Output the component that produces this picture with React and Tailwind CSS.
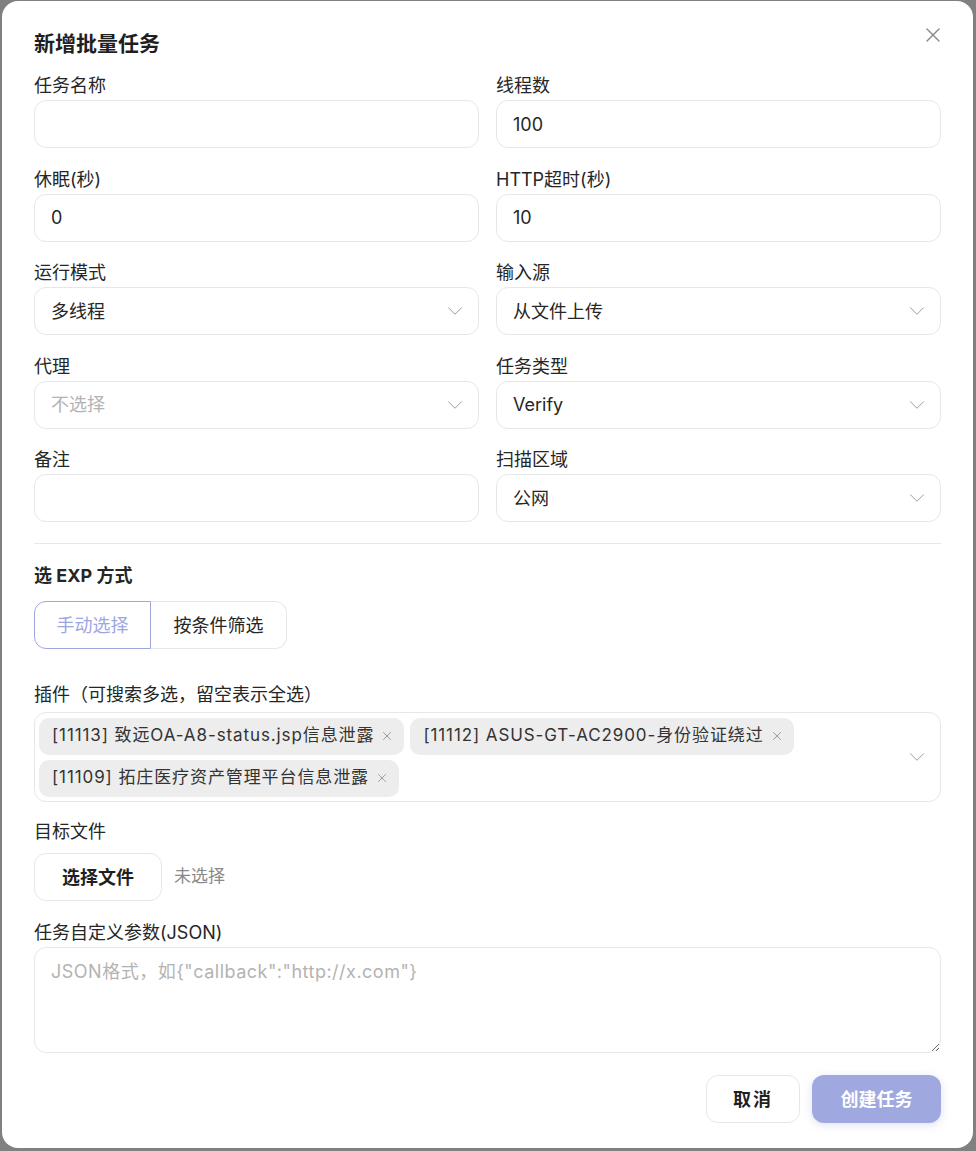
import React, { useState } from 'react';
import { X, ChevronDown } from 'lucide-react';

const FONT = { fontFamily: 'Inter, "Noto Sans CJK SC", sans-serif' };

// Text input styled like the reference
const Field = ({ label, value, placeholder }) => (
  <div className="flex flex-col">
    <label className="h-[26px] text-[18px] leading-[24px] text-[#262626]">{label}</label>
    <input
      defaultValue={value}
      placeholder={placeholder}
      className="h-[48px] w-full rounded-[12px] border border-[#e5e7eb] bg-white px-4 text-[18px] text-[#262626] outline-none placeholder:text-[#b3b3b3]"
    />
  </div>
);

// Fake select box with a thin chevron
const SelectField = ({ label, value, muted }) => (
  <div className="flex flex-col">
    <label className="h-[26px] text-[18px] leading-[24px] text-[#262626]">{label}</label>
    <div className="flex h-[48px] items-center justify-between rounded-[12px] border border-[#e5e7eb] bg-white pl-4 pr-[10px]">
      <span className={`text-[18px] ${muted ? 'text-[#b3b3b3]' : 'text-[#262626]'}`}>{value}</span>
      <ChevronDown size={26} strokeWidth={0.9} className="text-[#9a9a9a]" />
    </div>
  </div>
);

const Tag = ({ children }) => (
  <span className="flex h-[37px] items-center gap-[6px] rounded-[10px] bg-[#ededed] pl-[13px] pr-[10px] text-[17px] tracking-[0.9px] text-[#333]">
    {children}
    <X size={14} strokeWidth={1.4} className="text-[#8a8a8a]" />
  </span>
);

export default function App() {
  const [mode, setMode] = useState('manual');

  return (
    <div className="min-h-[1151px] w-[976px] bg-[#808080] pl-[2px] pt-[1px]" style={FONT}>
      <div className="relative flex h-[1147px] w-[971px] flex-col rounded-[16px] bg-white px-[32px] pt-[28px] text-[#262626]">
        <button className="absolute right-[24px] top-[18px] p-1 text-[#8a8a8a]">
          <X size={24} strokeWidth={1.4} />
        </button>

        <h2 className="h-[30px] text-[21px] font-bold leading-[30px] text-[#1f1f1f]">新增批量任务</h2>

        <div className="mt-[15px] grid grid-cols-2 gap-x-[17px] gap-y-[19.5px]">
          <Field label="任务名称" />
          <Field label="线程数" value="100" />
          <Field label="休眠(秒)" value="0" />
          <Field label="HTTP超时(秒)" value="10" />
          <SelectField label="运行模式" value="多线程" />
          <SelectField label="输入源" value="从文件上传" />
          <SelectField label="代理" value="不选择" muted />
          <SelectField label="任务类型" value="Verify" />
          <Field label="备注" />
          <SelectField label="扫描区域" value="公网" />
        </div>

        <div className="mt-[21px] h-px bg-[#e5e7eb]" />

        <h3 className="mt-[20px] h-[24px] text-[18px] font-bold leading-[24px] text-[#262626]">选 EXP 方式</h3>

        <div className="mt-[13px] flex">
          <button
            onClick={() => setMode('manual')}
            className={`h-[48px] w-[117px] rounded-l-[12px] border text-[18px] ${
              mode === 'manual' ? 'border-[#9ea6e2] text-[#9ea6e2]' : 'border-[#e5e7eb] text-[#262626]'
            }`}
          >
            手动选择
          </button>
          <button
            onClick={() => setMode('filter')}
            className={`h-[48px] w-[136px] rounded-r-[12px] border border-l-0 text-[18px] ${
              mode === 'filter' ? 'border-[#9ea6e2] text-[#9ea6e2]' : 'border-[#e5e7eb] text-[#262626]'
            }`}
          >
            按条件筛选
          </button>
        </div>

        <label className="mt-[34px] h-[29px] text-[18px] leading-[24px]">插件（可搜索多选，留空表示全选）</label>
        <div className="flex h-[90px] items-center rounded-[12px] border border-[#e5e7eb] pl-[4px] pr-[10px]">
          <div className="flex flex-1 flex-wrap content-start gap-x-[6px] gap-y-[5px]">
            <Tag>[11113] 致远OA-A8-status.jsp信息泄露</Tag>
            <Tag>[11112] ASUS-GT-AC2900-身份验证绕过</Tag>
            <Tag>[11109] 拓庄医疗资产管理平台信息泄露</Tag>
          </div>
          <ChevronDown size={26} strokeWidth={0.9} className="text-[#9a9a9a]" />
        </div>

        <label className="mt-[18px] h-[33px] text-[18px] leading-[24px]">目标文件</label>
        <div className="flex items-center gap-[12px]">
          <button className="h-[48px] w-[128px] rounded-[12px] border border-[#e5e7eb] text-[18px] font-bold text-[#1f1f1f]">
            选择文件
          </button>
          <span className="text-[17px] text-[#8a8a8a]">未选择</span>
        </div>

        <label className="mt-[20px] h-[26px] text-[18px] leading-[24px]">任务自定义参数(JSON)</label>
        <textarea
          placeholder={'JSON格式，如{"callback":"http://x.com"}'}
          className="h-[106px] w-full rounded-[12px] border border-[#e5e7eb] px-4 py-[10px] text-[18px] tracking-[0.5px] outline-none placeholder:text-[#b3b3b3]"
        />

        <div className="mt-[22px] flex justify-end gap-[12px]">
          <button className="h-[48px] w-[94px] rounded-[12px] border border-[#e5e7eb] text-[18px] font-bold tracking-[2px] text-[#1f1f1f]">
            取消
          </button>
          <button className="h-[48px] w-[129px] rounded-[12px] bg-[#a0a9df] text-[18px] font-bold text-white shadow-[0_2px_8px_rgba(160,169,223,0.35)]">
            创建任务
          </button>
        </div>
      </div>
    </div>
  );
}
